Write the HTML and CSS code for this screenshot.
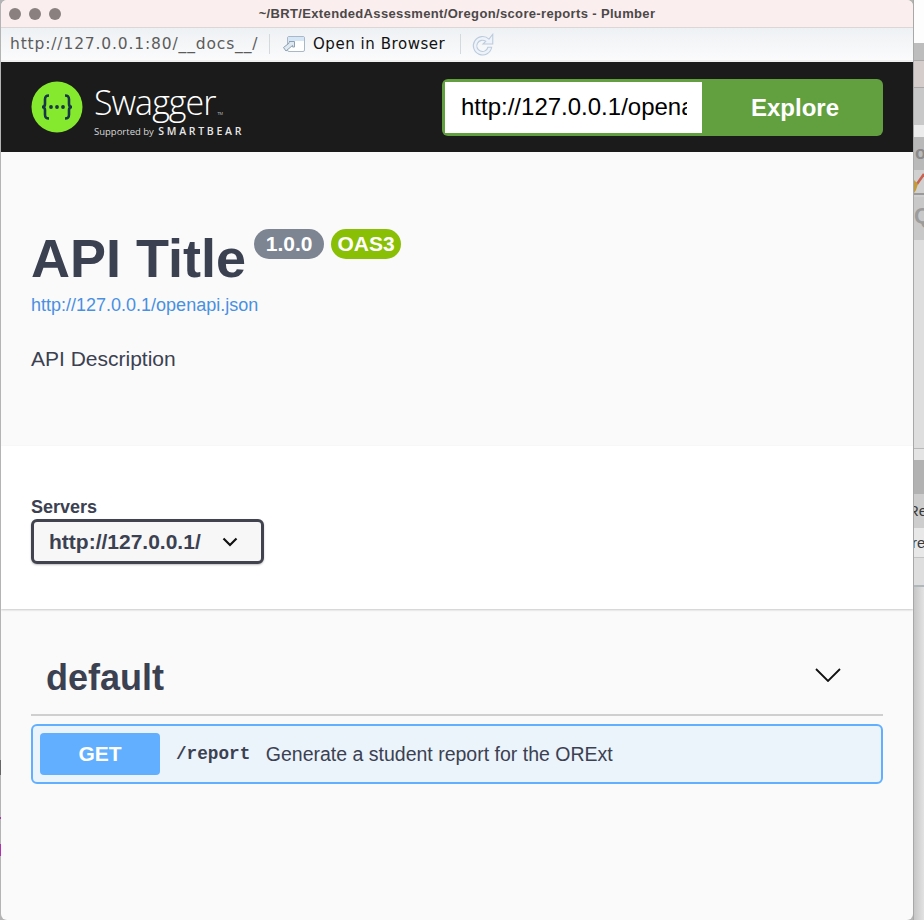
FILE: index.html
```html
<!DOCTYPE html>
<html lang="en">
<head>
<meta charset="utf-8">
<title>Plumber</title>
<link rel="stylesheet" href="styles.css">
</head>
<body>
<div class="desktop">
  <div class="window">
    <div class="titlebar">
      <div class="lights"><i></i><i></i><i></i></div>
      <div class="wintitle">~/BRT/ExtendedAssessment/Oregon/score-reports - Plumber</div>
    </div>
    <div class="toolbar">
      <span class="addr">http://127.0.0.1:80/__docs__/</span>
      <span class="sep"></span>
      <svg class="openicon" width="24" height="20" viewBox="0 0 24 20">
        <rect x="5.5" y="2.5" width="17" height="15" rx="1.5" fill="#fff" stroke="#a9b7c6"/>
        <rect x="6" y="3" width="16" height="4" fill="#d5e6f6"/>
        <path d="M1.5 13.5 7 9.2V7.5h5.5V13H10.6V11.4L4 17z" fill="#dfe9f2" stroke="#8fa0b1"/>
      </svg>
      <span class="openlabel">Open in Browser</span>
      <span class="sep sep2"></span>
      <svg class="reload" width="26" height="26" viewBox="0 0 24 24">
        <path d="M17.5 7.5A8.5 8.5 0 1 0 20 15h-3.5A5.2 5.2 0 1 1 14.5 9.5L12 12h9V3l-3.5 4.5z" fill="#eef3fa" stroke="#bccbdd" stroke-width="1"/>
      </svg>
    </div>
    <div class="page">
      <header class="topbar">
        <div class="logo">
          <svg class="logomark" width="52" height="52" viewBox="0 0 52 52">
            <circle cx="26" cy="26" r="25.5" fill="#85ea2d"/>
            <path d="M18 14.5c-3.600 0-4 1.600-4 4v4.500c0 1.800-1 3-3 3 2 0 3 1.200 3 3v4.500c0 2.400.4 4 4 4M34 14.500c3.600 0 4 1.600 4 4v4.500c0 1.800 1 3 3 3-2 0-3 1.200-3 3v4.500c0 2.400-.4 4-4 4" fill="none" stroke="#173647" stroke-width="2.600"/>
            <circle cx="20" cy="26" r="1.900" fill="#173647"/><circle cx="26" cy="26" r="1.900" fill="#173647"/><circle cx="32" cy="26" r="1.900" fill="#173647"/>
          </svg>
          <div class="wordmark">
            <div class="swagger">Swagger<sup class="tm">TM</sup></div>
            <div class="support"><span>Supported by</span> <b>SMARTBEAR</b></div>
          </div>
        </div>
        <form class="explore">
          <div class="urlbox"><span>http://127.0.0.1/openapi.json</span></div>
          <div class="explorebtn">Explore</div>
        </form>
      </header>
      <section class="info">
        <div class="titlerow">
          <h1>API Title</h1>
          <span class="badge grey">1.0.0</span>
          <span class="badge green">OAS3</span>
        </div>
        <a class="speclink">http://127.0.0.1/openapi.json</a>
        <p class="desc">API Description</p>
      </section>
      <section class="servers">
        <div class="serverlabel">Servers</div>
        <div class="select">
          <span>http://127.0.0.1/</span>
          <svg width="16" height="10" viewBox="0 0 16 10"><path d="M1.500 1.500 8 8l6.500-6.500" fill="none" stroke="#111" stroke-width="2.200"/></svg>
        </div>
      </section>
      <section class="ops">
        <div class="taghead">
          <h2>default</h2>
          <svg width="26" height="14" viewBox="0 0 26 14"><path d="M1 1 13 13 25 1" fill="none" stroke="#111" stroke-width="1.800"/></svg>
        </div>
        <div class="op">
          <span class="method">GET</span>
          <span class="path">/report</span>
          <span class="summary">Generate a student report for the ORExt</span>
        </div>
      </section>
    </div>
  </div>
  <aside class="behind">
    <div class="b b1"></div>
    <div class="b b2"></div>
    <div class="b b3"></div>
    <div class="b b4"></div>
    <div class="b b5"></div>
    <div class="b b6">o</div>
    <div class="b b7">
      <svg width="10" height="27" viewBox="0 0 10 27"><path d="M3 14 10 4" stroke="#c9614f" stroke-width="2.500"/><path d="M0 10 4 14 2 20 0 23z" fill="#c39a3c"/><path d="M0 24h10" stroke="#9a9a9a" stroke-width="2"/></svg>
    </div>
    <div class="b b8">Q</div>
    <div class="b b9"></div>
    <div class="b b10"></div>
    <div class="b b11"></div>
    <div class="b b12">Re</div>
    <div class="b b13">re</div>
    <div class="b b14"></div>
    <div class="b b15"></div>
  </aside>
</div>
</body>
</html>
```
FILE: styles.css
```css
* { box-sizing: border-box; }
html, body { margin: 0; padding: 0; }
body { width: 924px; height: 920px; overflow: hidden; background: #d8d8d8; font-family: "Liberation Sans", Arial, sans-serif; }
.desktop { display: flex; height: 920px; padding-left: 1px; background: linear-gradient(#b4b4b4 0 760px, #666 760px 775px, #b4b4b4 775px 817px, #b030b0 817px 819px, #b4b4b4 819px 844px, #b030b0 844px 856px, #b4b4b4 856px); }
.window { width: 912px; height: 920px; display: flex; flex-direction: column; background: #fafafa; border-radius: 6px; overflow: hidden; flex: none; }
.titlebar { height: 28px; flex: none; background: #faeeee; border-bottom: 1px solid #dcd6d6; display: flex; align-items: center; padding-left: 8px; }
.lights { display: flex; gap: 8px; }
.lights i { width: 12px; height: 12px; border-radius: 50%; background: #8a8080; display: block; }
.wintitle { flex: 1; text-align: center; font-size: 13px; letter-spacing: .35px; font-weight: bold; color: #4c4848; margin-left: -60px; white-space: nowrap; }
.toolbar { height: 34px; flex: none; background: linear-gradient(#eef1f4, #fbfbfc); border-bottom: 2px solid #f0f0f0; display: flex; align-items: center; padding-left: 9px; font-family: "DejaVu Sans", sans-serif; }
.addr { color: #5c5c5c; width: 259px; white-space: nowrap; font-size: 15.500px; letter-spacing: .85px; }
.sep { width: 1px; height: 20px; background: #d5d8dc; display: block; flex: none; }
.openicon { margin-left: 12px; }
.openlabel { margin-left: 7px; color: #111; width: 132px; font-size: 15px; letter-spacing: .55px; white-space: nowrap; }
.sep2 { margin-left: 15px; }
.reload { margin-left: 9px; }
.page { flex: 1; display: flex; flex-direction: column; }
.topbar { height: 90px; flex: none; background: #1b1b1b; display: flex; align-items: center; justify-content: space-between; padding: 0 30px; }
.logo { display: flex; align-items: center; }
.wordmark { margin-left: 11px; color: #fff; font-family: "Open Sans", sans-serif; }
.swagger { font-size: 34px; letter-spacing: -1px; line-height: 40px; font-weight: 300; margin-top: 6px; }
.tm { font-size: 4px; vertical-align: baseline; margin-left: 2px; letter-spacing: 0; }
.support { font-size: 9.500px; line-height: 12px; color: #d8d8d8; margin-top: -9px; white-space: nowrap; }
.support b { font-weight: 600; font-size: 10.500px; letter-spacing: 2.700px; color: #e8e8e8; margin-left: 2px; }
.explore { width: 441px; height: 57px; margin: 0; background: #62a03f; border-radius: 6px; padding: 3px; display: flex; }
.urlbox { width: 257px; background: #fff; padding: 0 15px 0 16px; display: flex; align-items: center; font-size: 24px; color: #000; overflow: hidden; white-space: nowrap; }
.urlbox span { display: block; width: 226px; overflow: hidden; }
.explorebtn { flex: 1; padding-left: 8px; text-align: center; color: #fff; font-weight: bold; font-size: 24px; line-height: 51px; }
.info { height: 294px; flex: none; padding: 75px 30px 0; background: #fafafa; }
.titlerow { display: flex; align-items: flex-start; color: #3b4151; height: 66px; }
h1 { margin: 0; font-size: 54px; line-height: 62px; font-weight: bold; color: #3b4151; }
.badge { height: 30px; border-radius: 15px; color: #fff; font-weight: bold; font-size: 21px; line-height: 30px; margin-top: 2px; text-align: center; width: 70px; }
.grey { background: #7d8492; margin-left: 8px; }
.green { background: #89bf04; margin-left: 7px; }
.speclink { display: block; color: #4990e2; font-size: 18px; line-height: 22px; margin-top: 1px; }
.desc { margin: 31px 0 0; font-size: 21px; line-height: 24px; color: #3b4151; }
.servers { height: 163px; flex: none; background: #fff; padding: 51px 30px 0; box-shadow: 0 1px 2px rgba(0,0,0,.2); position: relative; }
.serverlabel { font-size: 18px; line-height: 21px; font-weight: bold; color: #3b4151; margin-bottom: 1px; }
.select { width: 233px; height: 45px; border: 3px solid #41444e; border-radius: 6px; background: #f7f7f7; box-shadow: 0 1px 2px rgba(0,0,0,.25); display: flex; align-items: center; padding-left: 15px; font-size: 21px; font-weight: bold; color: #3b4151; }
.select svg { margin-left: 21px; margin-top: 1px; }
.ops { flex: 1; padding: 0 30px; }
.taghead { height: 107px; border-bottom: 2px solid #cfcfcf; display: flex; align-items: center; justify-content: space-between; padding: 28px 42px 0 15px; margin-bottom: 8px; }
.taghead h2 { margin: 0; font-size: 36px; line-height: 44px; font-weight: bold; color: #3b4151; position: relative; top: 2px; }
.taghead svg { position: relative; top: -1px; }
.op { height: 60px; border: 2px solid #61affe; border-radius: 6px; background: #ebf3fb; display: flex; align-items: center; padding-left: 7px; }
.method { width: 120px; height: 42px; border-radius: 4px; background: #61affe; color: #fff; font-weight: bold; font-size: 21px; line-height: 42px; text-align: center; }
.path { margin-left: 16px; font-family: "Liberation Mono", monospace; font-weight: bold; font-size: 17.700px; color: #3b4151; }
.summary { margin-left: 15.500px; font-size: 19.500px; color: #3b4151; }
.behind { flex: 1; display: flex; flex-direction: column; border-left: 1px solid #a8a8a8; overflow: hidden; font-size: 15px; color: #3a3a3a; }
.b { flex: none; overflow: hidden; white-space: nowrap; }
.b1 { height: 43px; background: #fdfdfd; }
.b2 { height: 17px; background: #bdbdbd; }
.b3 { height: 28px; background: #d5cccc; border-top: 1px solid #a8a8a8; border-bottom: 1px solid #a8a8a8; }
.b4 { height: 37px; background: #c8c8c8; }
.b5 { height: 12px; background: #ececec; }
.b6 { height: 33px; background: #b9b9b9; color: #8a8a8a; font-size: 18px; font-weight: bold; line-height: 33px; padding-left: 1px; }
.b7 { height: 27px; background: #d0d0d0; }
.b7 svg { display: block; }
.b8 { height: 43px; background: #c8c8c8; color: #9c9c9c; font-size: 22px; font-weight: bold; line-height: 38px; }
.b9 { height: 209px; background: #dedede; border-bottom: 1px solid #b8b8b8; }
.b10 { height: 11px; background: #e4e4e4; }
.b11 { height: 34px; background: #b2b2b2; }
.b12 { height: 34px; background: #cdcdcd; line-height: 34px; text-indent: -6px; }
.b13 { height: 30px; background: #e8e8e8; line-height: 30px; border-bottom: 1px solid #c4c4c4; text-indent: -2px; }
.b14 { height: 29px; background: #dedede; border-bottom: 2px solid #b0b8bc; }
.b15 { height: 333px; background: linear-gradient(90deg, #c6c6c6, #e2e2e2); }
```
